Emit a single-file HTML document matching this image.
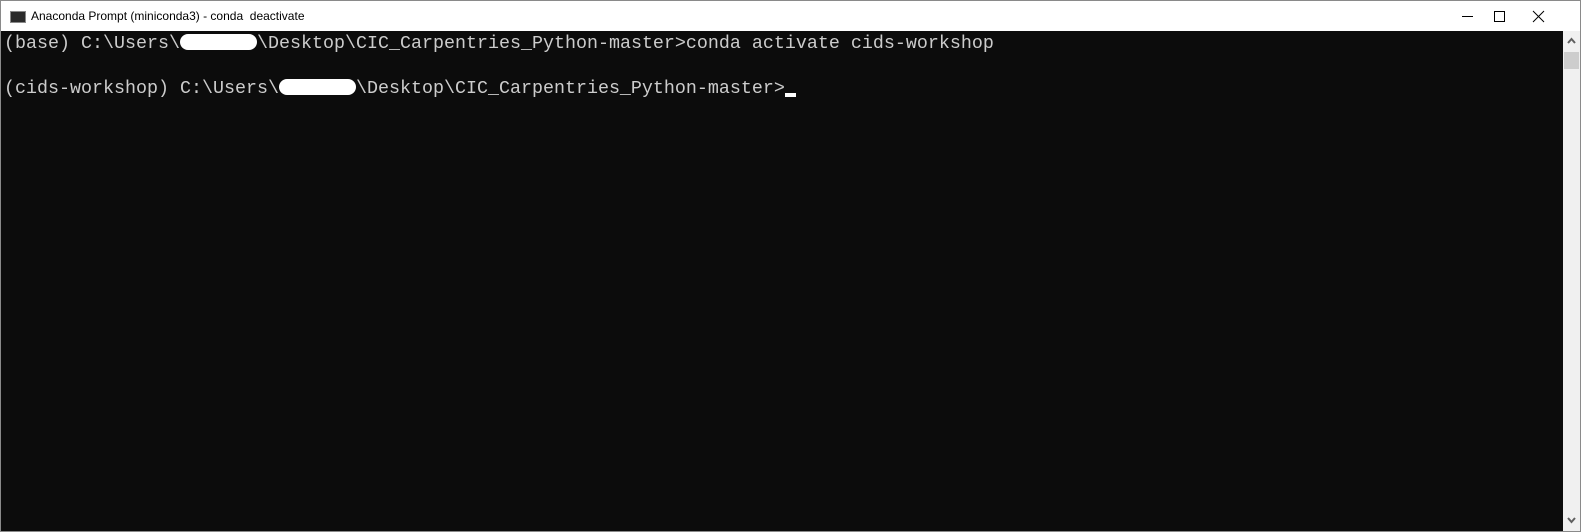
<!DOCTYPE html>
<html><head><meta charset="utf-8"><style>
html,body{margin:0;padding:0;width:1581px;height:532px;overflow:hidden;background:#fff}
.win{position:absolute;left:0;top:0;width:1579px;height:530px;border:1px solid #8a8a8a;background:#fff}
.title{position:absolute;left:0;top:0;width:1579px;height:30px;background:#fff}
.icon{position:absolute;left:9px;top:10px;width:14px;height:10px;background:#2b2b2b;border:1px solid #888}
.ttext{position:absolute;left:30px;top:8px;font:12px "Liberation Sans",sans-serif;color:#000}
.term{position:absolute;left:0;top:30px;width:1562px;height:500px;background:#0c0c0c}
.sb{position:absolute;left:1562px;top:30px;width:17px;height:500px;background:#f0f0f0}
.thumb{position:absolute;left:1px;top:21px;width:15px;height:17px;background:#cdcdcd}
pre{margin:0;position:absolute;left:3px;top:32px;font:18.33px/22.6px "Liberation Mono",monospace;color:#cccccc}
.red{display:inline-block;width:77px;height:16px;background:#fff;border-radius:8px;vertical-align:-2px}
.cur{display:inline-block;width:11px;height:4px;background:#fff;vertical-align:-4px}
</style></head><body>
<div class="win">
<div class="title"><div class="icon"></div><div class="ttext">Anaconda Prompt (miniconda3) - conda&nbsp; deactivate</div>
<svg style="position:absolute;left:1460px;top:8px" width="110" height="16">
<line x1="1" y1="7.5" x2="12" y2="7.5" stroke="#000"/>
<rect x="33.5" y="2.5" width="10" height="10" fill="none" stroke="#000"/>
<path d="M72 2L83 13M83 2L72 13" stroke="#000"/>
</svg></div>
<div class="term"></div>
<div class="sb"><svg width="17" height="20"><path d="M5 12l3.5-4 3.5 4" fill="none" stroke="#606060" stroke-width="2"/></svg><div class="thumb"></div>
<svg style="position:absolute;left:0;bottom:0" width="17" height="20"><path d="M5 7l3.5 4 3.5-4" fill="none" stroke="#606060" stroke-width="2"/></svg></div>
<pre>(base) C:\Users\<span class="red"></span>\Desktop\CIC_Carpentries_Python-master&gt;conda activate cids-workshop

(cids-workshop) C:\Users\<span class="red"></span>\Desktop\CIC_Carpentries_Python-master&gt;<span class="cur"></span></pre>
</div>
</body></html>
